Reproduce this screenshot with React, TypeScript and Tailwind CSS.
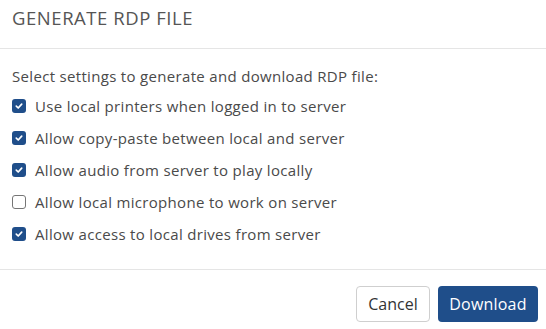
import React from "react";

const items: { label: string; checked: boolean }[] = [
  { label: "Use local printers when logged in to server", checked: true },
  { label: "Allow copy-paste between local and server", checked: true },
  { label: "Allow audio from server to play locally", checked: true },
  { label: "Allow local microphone to work on server", checked: false },
  { label: "Allow access to local drives from server", checked: true },
];

function Box({ checked }: { checked: boolean }) {
  if (!checked)
    return <span className="w-[14px] h-[14px] rounded-[3px] border border-[#767676] bg-white shrink-0" />;
  return (
    <span className="w-[14px] h-[14px] rounded-[3px] bg-[#1f4e8a] shrink-0 flex items-center justify-center">
      <svg width="10" height="10" viewBox="0 0 10 10">
        <path d="M2.3 5.2 L4.2 7 L7.7 3.2" fill="none" stroke="white" strokeWidth="1.7" strokeLinecap="round" strokeLinejoin="round" />
      </svg>
    </span>
  );
}

export default function App() {
  return (
    <div className="w-[546px] h-[329px] bg-white text-[#4a4a4a] overflow-hidden" style={{ fontFamily: '"Open Sans", sans-serif' }}>
      <div className="h-[49px] border-b border-[#e5e5e5] px-[12px] pt-[5px]">
        <div className="text-[18.5px] leading-[26px] tracking-[0.55px] text-[#555]">GENERATE RDP FILE</div>
      </div>
      <div className="h-[221px] border-b border-[#e5e5e5] px-[12px] pt-[16px] tracking-[0.32px]">
        <div className="text-[15px] leading-[22px] mb-[3px]">Select settings to generate and download RDP file:</div>
        <div className="flex flex-col">
          {items.map((it) => (
            <div key={it.label} className="h-[32px] flex items-center gap-[9px]">
              <Box checked={it.checked} />
              <span className="text-[15px] leading-[22px]">{it.label}</span>
            </div>
          ))}
        </div>
      </div>
      <div className="flex justify-end gap-[8px] px-[8px] pt-[16px]">
        <button className="h-[36px] w-[74px] rounded-[4px] border border-[#cfcfcf] bg-white text-[16px] text-[#333]">Cancel</button>
        <button className="h-[36px] w-[100px] rounded-[4px] bg-[#1f4e8a] text-[16px] tracking-[0.2px] text-white">Download</button>
      </div>
    </div>
  );
}
